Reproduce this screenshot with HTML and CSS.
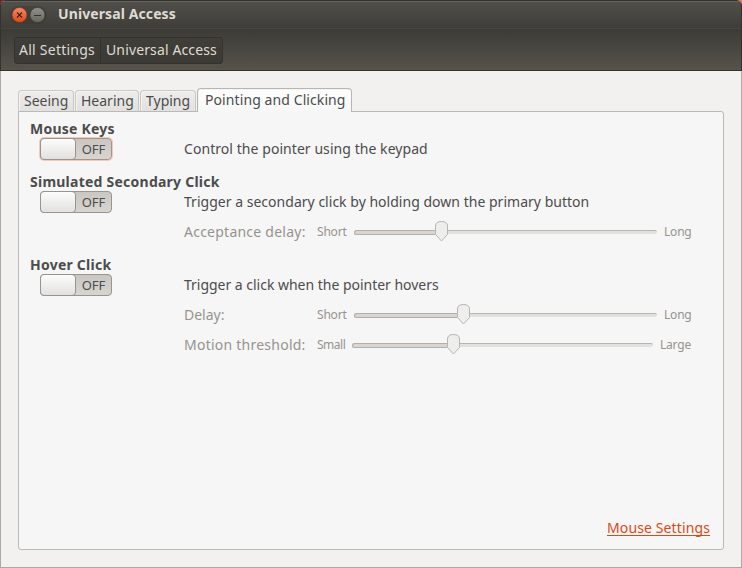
FILE: index.html
```html
<!DOCTYPE html>
<html lang="en">
<head>
<meta charset="utf-8">
<title>Universal Access</title>
<link rel="stylesheet" href="styles.css">
</head>
<body>
<div class="window">
  <header class="chrome">
    <div class="titlebar">
      <svg class="controls" width="38" height="20" viewBox="0 0 38 20">
        <defs>
          <linearGradient id="close" x1="0" y1="0" x2="0" y2="1"><stop offset="0" stop-color="#f58b69"/><stop offset="1" stop-color="#df4716"/></linearGradient>
          <linearGradient id="min" x1="0" y1="0" x2="0" y2="1"><stop offset="0" stop-color="#92918a"/><stop offset="1" stop-color="#65645d"/></linearGradient>
        </defs>
        <rect x="0" y="1" width="37" height="18" rx="9" fill="#37362f" opacity=".4"/>
        <circle cx="9.5" cy="10" r="7.5" fill="url(#close)" stroke="#6e2e1a" stroke-width=".6"/>
        <path d="M7 7.500l5 5M12 7.500l-5 5" stroke="#3c2118" stroke-width="1.1"/>
        <circle cx="27.500" cy="10" r="7.500" fill="url(#min)" stroke="#34332e" stroke-width=".6"/>
        <path d="M24 10.500h7" stroke="#33322d" stroke-width="1"/>
      </svg>
      <h1 class="title">Universal Access</h1>
    </div>
    <nav class="toolbar">
      <div class="crumbs">
        <span class="crumb crumb-all">All Settings</span><span class="crumb crumb-here">Universal Access</span>
      </div>
    </nav>
  </header>
  <main class="content">
    <div class="tabs">
      <span class="tab t-seeing">Seeing</span>
      <span class="tab t-hearing">Hearing</span>
      <span class="tab t-typing">Typing</span>
      <span class="tab active">Pointing and Clicking</span>
    </div>
    <section class="panel">
      <h2 class="heading">Mouse Keys</h2>
      <div class="row">
        <div class="switch focused"><span class="knob"></span><span class="state">OFF</span></div>
        <span class="text d-mouse">Control the pointer using the keypad</span>
      </div>
      <h2 class="heading">Simulated Secondary Click</h2>
      <div class="row">
        <div class="switch"><span class="knob"></span><span class="state">OFF</span></div>
        <span class="text d-sim">Trigger a secondary click by holding down the primary button</span>
      </div>
      <div class="setting">
        <span class="label l-wide">Acceptance delay:</span><span class="small s-short">Short</span>
        <div class="slider at-accept"><span class="fill"></span><svg class="thumb" width="13" height="21" viewBox="0 0 13 21"><path d="M.5 5Q.5.5 6.500.5T12.500 5V13.500L6.500 20L.5 13.500Z"/></svg><span class="rest"></span></div>
        <span class="small s-long">Long</span>
      </div>
      <h2 class="heading">Hover Click</h2>
      <div class="row">
        <div class="switch"><span class="knob"></span><span class="state">OFF</span></div>
        <span class="text d-hover">Trigger a click when the pointer hovers</span>
      </div>
      <div class="setting">
        <span class="label">Delay:</span><span class="small s-short">Short</span>
        <div class="slider at-delay"><span class="fill"></span><svg class="thumb" width="13" height="21" viewBox="0 0 13 21"><path d="M.5 5Q.5.5 6.500.5T12.500 5V13.500L6.500 20L.5 13.500Z"/></svg><span class="rest"></span></div>
        <span class="small s-long">Long</span>
      </div>
      <div class="setting">
        <span class="label l-wide">Motion threshold:</span><span class="small s-small">Small</span>
        <div class="slider at-motion"><span class="fill"></span><svg class="thumb" width="13" height="21" viewBox="0 0 13 21"><path d="M.5 5Q.5.5 6.500.5T12.500 5V13.500L6.500 20L.5 13.500Z"/></svg><span class="rest"></span></div>
        <span class="small s-large">Large</span>
      </div>
      <a class="link">Mouse Settings</a>
    </section>
  </main>
</div>
</body>
</html>
```

FILE: styles.css
```css
* { box-sizing: border-box; }
html { background: linear-gradient(90deg, #7a1f2c 50%, #f0734f 50%); }
body {
  margin: 0;
  font: 14px/22px "Noto Sans", "Open Sans", sans-serif;
  color: #4c4c4c;
  white-space: nowrap;
}
.window {
  width: 742px;
  height: 568px;
  display: flex;
  flex-direction: column;
  border-radius: 6px 6px 0 0;
  overflow: hidden;
  background: #f2f1f0;
}
.chrome {
  flex: none;
  height: 71px;
  border: 1px solid #33322e;
  background: #3c3b37;
}
.titlebar {
  height: 27px;
  display: flex;
  align-items: center;
  padding-left: 9px;
  border-top: 1px solid #65635b;
  background: linear-gradient(#504f49, #3e3d39);
}
.controls { flex: none; margin-top: -1px; }
.title {
  margin: -3px 0 0 10px;
  font-size: 14px;
  line-height: 22px;
  font-weight: 700;
  color: #dfdbd2;
  letter-spacing: 0.1px;
}
.toolbar {
  height: 42px;
  padding: 8px 0 0 13px;
  border-top: 1px solid #474640;
  background: linear-gradient(#3c3b37, #55534b);
}
.crumbs {
  display: flex;
  width: 209px;
  height: 27px;
  border: 1px solid #33322e;
  border-radius: 3px;
  background: linear-gradient(#3f3e39, #3b3a35);
  box-shadow: 0 1px 0 #55534b;
}
.crumb { color: #dfdbd2; line-height: 24px; padding-left: 4px; }
.crumb-all { width: 86px; border-right: 1px solid #32312d; letter-spacing: 0.25px; }
.crumb-here { padding-left: 5px; letter-spacing: 0.13px; }
.content {
  flex: none;
  height: 497px;
  padding: 17px 17px 0;
  border: 1px solid #aaa9a6;
  border-top: 0;
}
.tabs { display: flex; align-items: flex-end; height: 23px; }
.tab {
  height: 21px;
  padding-left: 5px;
  line-height: 19px;
  border: 1px solid #c9c8c6;
  border-bottom: 0;
  border-radius: 4px 4px 0 0;
  background: linear-gradient(#eeedec, #e3e1df);
  box-shadow: inset 1px 1px 0 #f5f4f3;
}
.t-seeing { width: 56px; margin-right: 1px; }
.t-hearing { width: 64px; margin-right: 1px; }
.t-typing { width: 56px; margin-right: 1px; }
.tab.active {
  width: 155px;
  height: 24px;
  padding-left: 7px;
  margin-bottom: -1px;
  line-height: 22px;
  letter-spacing: 0.09px;
  border-color: #b8b6b3;
  background: linear-gradient(#fff, #f6f6f6);
  position: relative;
}
.panel {
  width: 706px;
  height: 439px;
  padding: 8px 11px 0;
  border: 1px solid #bbb9b6;
  border-radius: 0 3px 3px 3px;
  background: #f6f6f6;
  display: flex;
  flex-direction: column;
}
.heading {
  margin: 0;
  height: 18px;
  font-size: 14px;
  line-height: 18px;
  font-weight: 700;
  letter-spacing: 0.24px;
}
.row { display: flex; height: 22px; margin: 0 0 13px 10px; }
.row:has(+ .setting) { margin-bottom: 8px; }
.row .text { margin-left: 72px; }
.d-mouse { letter-spacing: 0.06px; }
.d-sim { letter-spacing: 0.02px; }
.d-hover { letter-spacing: -0.02px; }
.switch {
  width: 72px;
  height: 22px;
  display: flex;
  flex: none;
  border: 1px solid #989590;
  border-radius: 4px;
  background: linear-gradient(#cac6c2, #d8d5d1);
}
.focused { border-color: #a99387; box-shadow: 0 0 0 1px #f3c9b8; }
.knob {
  width: 36px;
  height: 22px;
  margin: -1px 0 0 -1px;
  border: 1px solid #989590;
  border-radius: 4px;
  background: linear-gradient(#fcfcfc, #e2e1df);
}
.state { width: 35px; text-align: center; font-size: 13px; line-height: 21px; }
.setting { display: flex; align-items: center; height: 22px; padding-left: 154px; color: #96938f; }
.setting + .heading { margin-top: 13px; }
.setting + .setting { margin-top: 8px; }
.label { width: 133px; }
.l-wide { letter-spacing: 0.24px; }
.small { font-size: 12px; line-height: 20px; letter-spacing: -0.2px; }
.s-short { width: 37px; }
.s-small { width: 35px; letter-spacing: -0.5px; }
.slider { display: flex; align-items: center; width: 303px; height: 22px; margin-right: 7px; }
.at-motion { width: 301px; }
.fill {
  height: 5px;
  width: 81px;
  border: 1px solid #b3afaa;
  border-right: 0;
  border-radius: 3px 0 0 3px;
  background: #d9d6d2;
}
.at-delay .fill { width: 103px; }
.at-motion .fill { width: 95px; }
.thumb { flex: none; margin-top: -1px; }
.thumb path { fill: #eeeeed; stroke: #b8b6b3; }
.rest {
  flex: 1;
  height: 4px;
  margin-top: -1px;
  border-top: 1px solid #b8b5b1;
  border-radius: 0 3px 3px 0;
  background: #e2e1df;
}
.link {
  align-self: flex-end;
  margin: auto 2px 13px 0;
  height: 18px;
  line-height: 19px;
  width: 103px;
  letter-spacing: 0.12px;
  color: #dd4814;
  border-bottom: 1px solid #dd4814;
}
```
